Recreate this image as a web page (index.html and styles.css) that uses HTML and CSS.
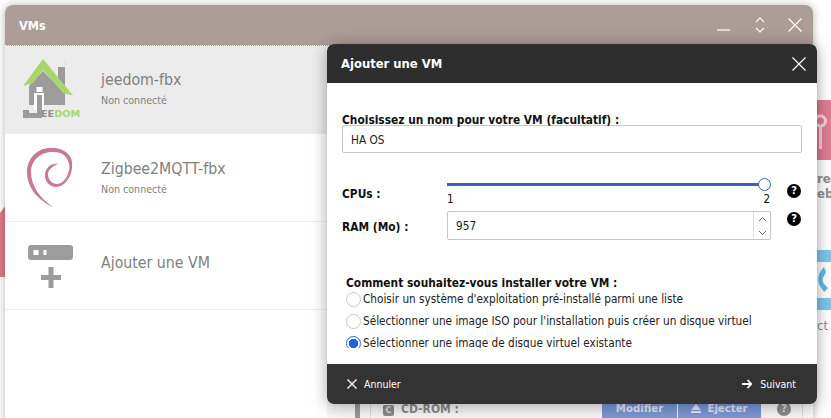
FILE: index.html
```html
<!DOCTYPE html>
<html lang="fr">
<head>
<meta charset="utf-8">
<title>VMs</title>
<link rel="stylesheet" href="styles.css">
</head>
<body>
<div class="desktop">
  <div class="bg-tile bg-pink-left"></div>
  <div class="bg-tile bg-pink-right">
    <svg width="14" height="60" viewBox="0 0 14 60"><circle cx="3.500" cy="21" r="5" fill="none" stroke="#f3d3da" stroke-width="3"/><rect x="2" y="27" width="3" height="22" fill="#f3d3da"/></svg>
  </div>
  <div class="bg-text bg-text-a">res<br>ebo</div>
  <div class="bg-tile bg-blue-right">
    <svg width="14" height="60" viewBox="0 0 14 60"><rect x="0" width="14" height="12" fill="#7cc7ec"/><rect x="0" y="48" width="14" height="12" fill="#7cc7ec"/><path d="M7 17C1 23 0 30 3 36L7 42L11 38L7 34C5 31 5 28 7 26L9 22Z" fill="#5fb9e4"/></svg>
  </div>
  <div class="bg-text bg-text-b">ct</div>

  <section class="window">
    <header class="win-head">
      <span class="win-title">VMs</span>
      <span class="win-controls">
        <svg class="ctl-min" width="13" height="2" viewBox="0 0 13 2"><path d="M0 1H13" stroke="#fff" stroke-width="1.200"/></svg>
        <svg width="10" height="16" viewBox="0 0 10 16"><path d="M1 5L5 1L9 5M1 11L5 15L9 11" fill="none" stroke="#fff" stroke-width="1.100"/></svg>
        <svg width="14" height="14" viewBox="0 0 14 14"><path d="M0.500 0.500L13.500 13.500M13.500 0.500L0.500 13.500" stroke="#fff" stroke-width="1.200"/></svg>
      </span>
    </header>
    <div class="win-body">
      <nav class="vm-list">
        <div class="vm-row vm-row-active">
          <svg class="vm-icon" width="70" height="80" viewBox="10 50 70 80">
            <path d="M29 86L43 71L58 86V67H65V105H29Z" fill="#9c9c9c"/>
            <path d="M23 86L43 59L73 95.500L63 93L43 70L33 83Z" fill="#a9d56d"/>
            <rect x="36.500" y="87" width="6" height="5" fill="#fff"/>
            <rect x="34" y="93" width="10" height="17" fill="#fff"/>
            <path d="M37 95H42V118H23V110H29V113H37Z" fill="#9c9c9c"/>
            <path d="M64 66L66 63L65 60" fill="none" stroke="#c8c8c8" stroke-width=".6"/>
            <text x="41" y="117" class="logo-text" textLength="39" lengthAdjust="spacingAndGlyphs"><tspan fill="#8f8f8f">EE</tspan><tspan fill="#a9d56d">DOM</tspan></text>
          </svg>
          <div class="vm-meta vm-meta-first">
            <div class="vm-name">jeedom-fbx</div>
            <div class="vm-status">Non connecté</div>
          </div>
        </div>
        <div class="vm-row">
          <svg class="vm-icon" width="70" height="80" viewBox="10 138 70 80">
            <path d="M53 207C38 200 27 188 27 172C27 158 38 147 52 148C65 148 74 156 72 168C71 178 64 187 56 187C49 187 44 180 45 174C46 167 52 163 58 164C53 166 48.500 169 48 174C48 180 52 184 57 184C64 184 69 175 69.500 167C69 157 62 151 52 152C40 152 31 161 31 172C31 186 40 198 53 207Z" fill="#cb7890"/>
          </svg>
          <div class="vm-meta vm-meta-second">
            <div class="vm-name">Zigbee2MQTT-fbx</div>
            <div class="vm-status">Non connecté</div>
          </div>
        </div>
        <div class="vm-row">
          <svg class="vm-icon" width="70" height="80" viewBox="10 226 70 80">
            <rect x="28" y="245" width="45" height="15" rx="3" fill="#9c9c9c"/>
            <rect x="33.500" y="250" width="5" height="5" fill="#fff"/>
            <rect x="43.500" y="250" width="3" height="5" fill="#fff"/>
            <path d="M48.500 267H53.500V275H61V280H53.500V288H48.500V280H41V275H48.500Z" fill="#9c9c9c"/>
          </svg>
          <div class="vm-meta vm-meta-third">
            <div class="vm-name">Ajouter une VM</div>
          </div>
        </div>
      </nav>
      <div class="vm-detail">
        <div class="detail-bar"></div>
        <div class="detail-panel">
          <div class="disk-row">
            <span class="disk-label"><span class="disk-glyph">C</span>CD-ROM :</span>
            <span class="disk-btn disk-btn-a">Modifier</span>
            <span class="disk-btn disk-btn-b">
              <svg width="10" height="9" viewBox="0 0 10 9"><path d="M5 0L10 6H0Z M0 7H10V9H0Z" fill="#dfe6f7"/></svg>
              Ejecter
            </span>
            <span class="disk-help">?</span>
          </div>
        </div>
      </div>
    </div>
  </section>

  <section class="dialog">
    <header class="dlg-head">
      <span class="dlg-title">Ajouter une VM</span>
      <svg width="14" height="14" viewBox="0 0 14 14"><path d="M0.500 0.500L13.500 13.500M13.500 0.500L0.500 13.500" stroke="#fff" stroke-width="1.200"/></svg>
    </header>
    <div class="dlg-main">
      <form class="dlg-form">
        <label class="label name-label">Choisissez un nom pour votre VM (facultatif) :</label>
        <div class="text-input name-input">HA OS</div>

        <div class="field-row cpu-row">
          <span class="label field-label">CPUs :</span>
          <div class="slider">
            <div class="slider-track"><span class="slider-thumb"></span></div>
            <div class="slider-scale"><span>1</span><span>2</span></div>
          </div>
          <span class="help">?</span>
        </div>

        <div class="field-row ram-row">
          <span class="label field-label">RAM (Mo) :</span>
          <div class="text-input ram-input">
            <span class="ram-value">957</span>
            <span class="spinner">
              <svg width="9" height="22" viewBox="0 0 9 22"><path d="M1 6L4.500 2.500L8 6M1 16L4.500 19.500L8 16" fill="none" stroke="#666" stroke-width="1"/></svg>
            </span>
          </div>
          <span class="help help-ram">?</span>
        </div>

        <div class="label how-label">Comment souhaitez-vous installer votre VM :</div>
        <div class="choice"><span class="radio"></span>Choisir un système d'exploitation pré-installé parmi une liste</div>
        <div class="choice"><span class="radio"></span>Sélectionner une image ISO pour l'installation puis créer un disque virtuel</div>
        <div class="choice"><span class="radio radio-on"></span>Sélectionner une image de disque virtuel existante</div>
      </form>
    </div>
    <footer class="dlg-foot">
      <span class="foot-btn">
        <svg width="10" height="10" viewBox="0 0 10 10"><path d="M0.500 0.500L9.500 9.500M9.500 0.500L0.500 9.500" stroke="#fff" stroke-width="1.300"/></svg>
        Annuler
      </span>
      <span class="foot-btn foot-next">
        <svg width="10" height="10" viewBox="0 0 10 10"><path d="M0 5H9M5.500 1L9.300 5L5.500 9" fill="none" stroke="#fff" stroke-width="1.800"/></svg>
        Suivant
      </span>
    </footer>
  </section>
</div>
</body>
</html>
```
FILE: styles.css
```css
* { box-sizing: border-box; }
html, body { margin: 0; padding: 0; }
body {
  width: 831px;
  height: 418px;
  overflow: hidden;
  background: #fff;
  font-family: "DejaVu Sans", "Noto Sans", sans-serif;
  font-stretch: condensed;
}
.desktop { position: relative; width: 831px; height: 418px; overflow: hidden; }

.bg-tile { position: absolute; }
.bg-pink-left {
  left: 0; top: 205px; width: 8px; height: 72px;
  background: #dd7b88;
  clip-path: polygon(0 8px, 6px 0, 100% 0, 100% 100%, 0 100%);
}
.bg-pink-right {
  left: 817px; top: 100px; width: 14px; height: 60px;
  background: #e17c93;
}
.bg-blue-right { left: 817px; top: 250px; width: 14px; height: 60px; }
.bg-tile svg { display: block; }
.bg-text {
  position: absolute;
  left: 817px;
  color: #8e8e8e;
  font-size: 13px;
  line-height: 15px;
  font-weight: 700;
}
.bg-text-a { top: 171px; white-space: nowrap; }
.bg-text-b { top: 318px; font-weight: 400; }

.window {
  position: absolute;
  left: 5px; top: 5px;
  width: 808px; height: 440px;
  background: #fff;
  border-radius: 8px 8px 0 0;
  box-shadow: 0 0 8px rgba(0,0,0,.3);
  display: flex;
  flex-direction: column;
}
.win-head {
  height: 41px;
  flex: none;
  background: #ad9d98;
  border-radius: 8px 8px 0 0;
  border-bottom: 1px dotted #f2f2f2;
  display: flex;
  align-items: center;
  justify-content: space-between;
  padding: 0 11px 0 14px;
}
.win-title { color: #fff; font-size: 12.500px; font-weight: 700; }
.win-controls { display: flex; align-items: center; gap: 23px; }
.win-controls svg { display: block; }
.win-controls .ctl-min { margin: 9px 2px 0 0; }

.win-body { flex: 1; display: flex; min-height: 0; }
.vm-list { width: 322px; flex: none; }
.vm-row {
  height: 88px;
  display: flex;
  align-items: center;
  padding-left: 5px;
  border-bottom: 1px solid #ededed;
  background: #fff;
}
.vm-row-active { background: #ececec; }
.vm-icon { flex: none; margin-right: 21px; display: block; }
.vm-meta-first { padding-bottom: 3px; }
.vm-meta-second { padding-bottom: 1px; }
.vm-meta-third { padding-bottom: 5px; }
.vm-name { font-size: 15.750px; line-height: 20px; color: #808080; }
.vm-status { font-size: 10.600px; line-height: 14px; margin-top: 3px; color: #808080; }
.logo-text { font: 700 9px "DejaVu Sans", sans-serif; }

.vm-detail { flex: 1; display: flex; padding-left: 28px; background: #f7f7f7; }
.detail-bar { width: 5px; background: #999; }
.detail-panel {
  flex: 1;
  margin-left: 10px;
  margin-right: 10px;
  border-left: 1px solid #ddd;
  border-right: 1px solid #ddd;
  padding-top: 354px;
}
.disk-row { display: flex; align-items: flex-start; height: 30px; }
.disk-label {
  width: 231px;
  padding-left: 12px;
  font-size: 12px;
  line-height: 18px;
  font-weight: 700;
  color: #8b8b8b;
}
.disk-glyph {
  display: inline-block;
  width: 11px; height: 11px;
  margin-right: 7px;
  border-radius: 2px;
  background: #8b8b8b;
  color: #ddd;
  font-size: 9px;
  line-height: 11px;
  text-align: center;
}
.disk-btn {
  background: #7c97d6;
  color: #dfe6f7;
  font-size: 11.300px;
  line-height: 18px;
  font-weight: 700;
  height: 24px;
  display: flex;
  justify-content: center;
  gap: 6px;
}
.disk-btn svg { display: block; margin-top: 4px; }
.disk-btn-a { width: 75px; margin-right: 1px; }
.disk-btn-b { width: 83px; }
.disk-help {
  margin: 2px 0 0 16px;
  width: 14px; height: 14px;
  border-radius: 50%;
  background: #8b8b8b;
  color: #e0e0e0;
  font-size: 11px;
  line-height: 14px;
  font-weight: 700;
  text-align: center;
}

.dialog {
  position: absolute;
  left: 327px; top: 44px;
  width: 490px; height: 360px;
  border-radius: 7px;
  background: #fff;
  box-shadow: 0 2px 16px rgba(0,0,0,.35);
  display: flex;
  flex-direction: column;
  overflow: hidden;
}
.dlg-head {
  height: 39px;
  flex: none;
  background: #2e2e2e;
  display: flex;
  align-items: center;
  justify-content: space-between;
  padding: 0 11px 0 14px;
}
.dlg-head svg { display: block; }
.dlg-title { color: #fff; font-size: 12.900px; font-weight: 700; }
.dlg-main { flex: 1; min-height: 0; padding-bottom: 16px; display: flex; }
.dlg-form { flex: 1; overflow: hidden; padding: 29px 15px 0; }
.label { font-size: 11.850px; line-height: 16px; font-weight: 700; color: #111; display: block; }
.name-label { height: 13px; }
.text-input {
  border: 1px solid #c6c6c6;
  border-radius: 2px;
  background: #fff;
  font-size: 11.700px;
  color: #222;
}
.name-input { height: 28px; width: 460px; padding-left: 8px; line-height: 28px; }
.field-row { display: flex; }
.cpu-row { margin-top: 26px; height: 32px; }
.field-label { width: 105px; flex: none; }
.cpu-row .field-label { padding-top: 7px; }
.ram-row { height: 29px; }
.ram-row .field-label { padding-top: 8px; }
.slider { width: 324px; flex: none; padding-top: 4px; }
.slider-track { position: relative; width: 318px; height: 3px; background: #3565b3; }
.slider-thumb {
  position: absolute;
  right: -6px; top: -5px;
  width: 13px; height: 13px;
  border-radius: 50%;
  background: #fff;
  border: 1px solid #3565b3;
}
.slider-scale {
  width: 323px;
  display: flex;
  justify-content: space-between;
  font-size: 11.500px;
  line-height: 14px;
  margin-top: 6px;
  color: #111;
}
.help {
  width: 14px; height: 14px;
  margin-left: 16px;
  margin-top: 5px;
  border-radius: 50%;
  background: #000;
  color: #fff;
  font-size: 11px;
  line-height: 14px;
  font-weight: 700;
  text-align: center;
}
.help-ram { margin-top: 1px; }
.ram-input { width: 324px; height: 29px; flex: none; display: flex; justify-content: space-between; padding-left: 8px; line-height: 28px; }
.spinner { width: 17px; border-left: 1px solid #e0e0e0; display: flex; align-items: center; justify-content: center; }
.spinner svg { display: block; }
.how-label { margin: 35px 0 0 4px; height: 13px; }
.choice {
  display: flex;
  align-items: center;
  height: 22px;
  margin-left: 4px;
  font-size: 11.700px;
  color: #222;
  white-space: nowrap;
}
.radio {
  width: 15px; height: 15px;
  flex: none;
  border-radius: 50%;
  border: 1.500px solid #c8c8c8;
  background: #fff;
  margin-right: 2px;
}
.radio-on { border: 1.500px solid #2563d8; background: radial-gradient(circle, #2563d8 0 4.500px, #fff 5px); }

.dlg-foot {
  height: 40px;
  flex: none;
  background: #333;
  display: flex;
  align-items: center;
  justify-content: space-between;
  padding: 0 21px 0 20px;
}
.foot-btn { display: flex; align-items: center; gap: 7px; color: #fff; font-size: 10.500px; }
.foot-next { gap: 8px; }
.foot-btn svg { display: block; }
```
